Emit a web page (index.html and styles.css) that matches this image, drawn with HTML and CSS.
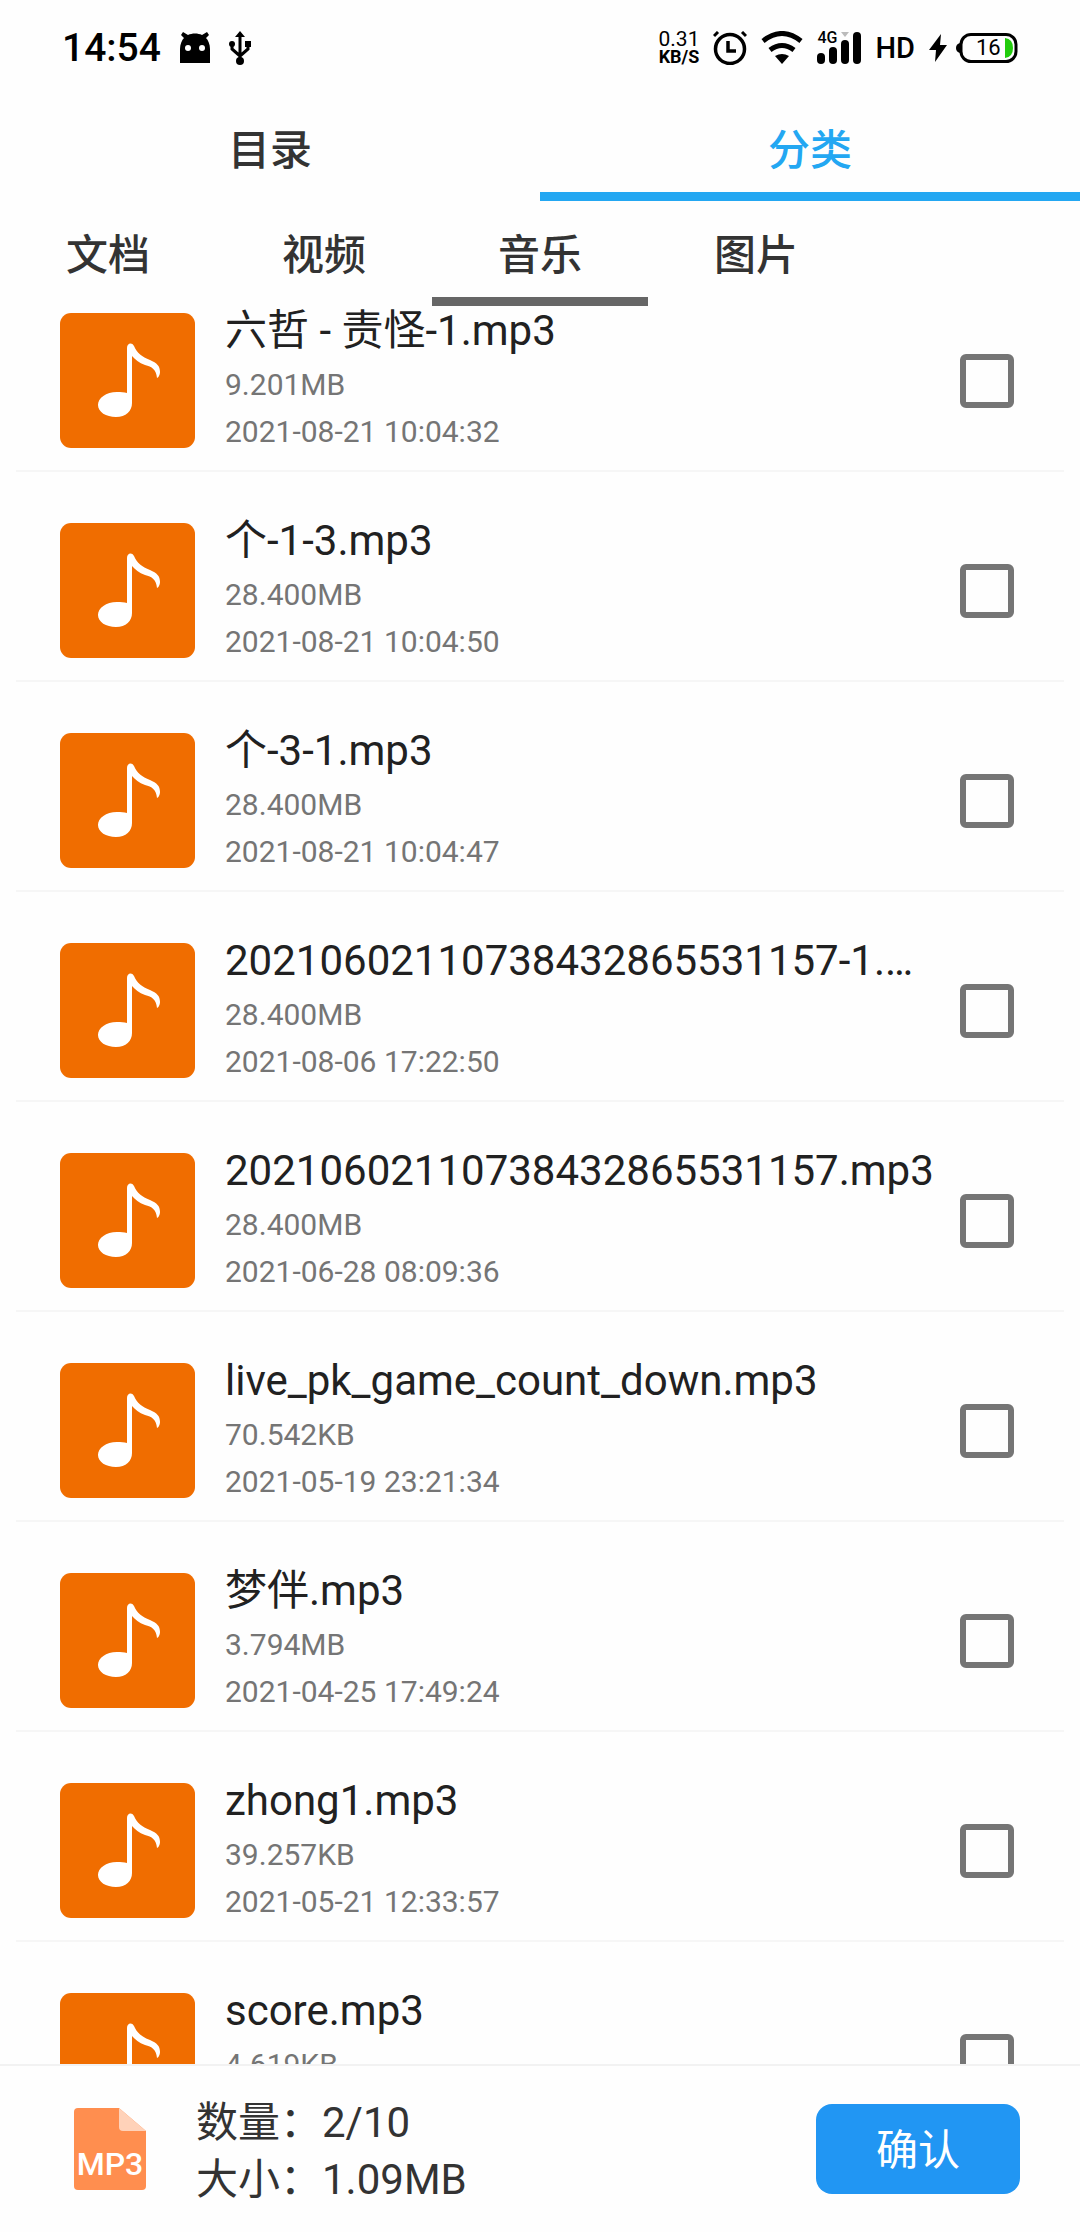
FILE: index.html
```html
<!DOCTYPE html>
<html lang="zh-CN">
<head>
    <meta charset="UTF-8">
    <meta name="viewport" content="width=device-width, initial-scale=1.0">
    <title>选择文件</title>
    <link rel="stylesheet" href="styles.css">
</head>
<body>
    <!-- shared icons -->
    <svg class="sprite" aria-hidden="true">
        <symbol id="note" viewBox="0 0 135 135">
            <rect width="135" height="135" rx="11" fill="#f06d00"/>
            <path fill="#fff" d="M67 80V35c0-5 5-6 7-2 3 7 8 11 16 14 7 3 10 6 10 12 0 3-2 6-3 6-1-9-5-11-12-13-6-2-10-6-13-9V90c0 8-6 14-16 14-10 0-18-5-18-12s8-13 19-13c4 0 7 0 10 1z"/>
        </symbol>
    </svg>

    <header class="status-bar">
        <div class="status-left">
            <span class="time">14:54</span>
            <svg width="32" height="32" viewBox="0 0 32 32">
                <path d="M1 31V17C1 12 3 8 5 6L2 3 4 0l5 3c4-2 10-2 14 0l5-3 2 3-3 3c2 2 4 6 4 11v14z"/>
                <circle cx="9" cy="16" r="3" fill="#fff"/>
                <circle cx="23" cy="16" r="3" fill="#fff"/>
            </svg>
            <svg width="22" height="34" viewBox="0 0 22 34">
                <path d="M11 5v24M3 13v5l8 7M19 13v5l-8 7" fill="none" stroke="#000" stroke-width="3"/>
                <path d="M11 0l5 6H6zM16 10h6v6h-6z"/>
                <circle cx="3" cy="13" r="3"/>
                <circle cx="11" cy="30" r="4"/>
            </svg>
        </div>
        <div class="status-right">
            <div class="speed"><span>0.31</span><b>KB/S</b></div>
            <svg width="34" height="34" viewBox="0 0 34 34">
                <circle cx="17" cy="18" r="14.5" fill="none" stroke="#000" stroke-width="3.5"/>
                <path d="M15 10v10h8" fill="none" stroke="#000" stroke-width="3.5"/>
                <path d="M1 5l4-4M29 1l4 4" stroke="#000" stroke-width="3"/>
            </svg>
            <svg width="42" height="34" viewBox="0 0 42 34">
                <path d="M2 10q19-15 38 0M9 19q12-9 24 0" fill="none" stroke="#000" stroke-width="5"/>
                <path d="M21 33l-7-8q7-4 14 0z"/>
            </svg>
            <div class="signal">
                <svg width="44" height="34" viewBox="0 0 44 34">
                    <rect x="0" y="22" width="8" height="11" rx="4"/>
                    <rect x="12" y="16" width="8" height="17" rx="4"/>
                    <rect x="24" y="9" width="8" height="24" rx="4"/>
                    <rect x="36" y="1" width="8" height="32" rx="4"/>
                    <path d="M24 1h8l-4 5z" fill="#bbb"/>
                </svg>
                <span class="network">4G</span>
            </div>
            <span class="hd">HD</span>
            <div class="power">
                <svg width="18" height="30" viewBox="0 0 18 30">
                    <path d="M12 1L0 17h7L6 29l12-17h-7z"/>
                </svg>
                <div class="battery">
                    <span>16</span>
                    <svg width="62" height="30" viewBox="0 0 62 30">
                        <rect x="5" y="1.5" width="55" height="27" rx="10" fill="none" stroke="#000" stroke-width="3"/>
                        <path d="M4 10q-4 1-4 5t4 5z"/>
                        <path d="M49 5q8 1 8 10t-8 10z" fill="#22cc0c"/>
                    </svg>
                </div>
            </div>
        </div>
    </header>

    <nav class="tabs">
        <button type="button">目录</button>
        <button type="button" class="active">分类</button>
    </nav>
    <nav class="sub-tabs">
        <button type="button">文档</button>
        <button type="button">视频</button>
        <button type="button" class="active">音乐</button>
        <button type="button">图片</button>
    </nav>

    <main class="file-list">
        <ul>
            <li>
                <svg class="thumb"><use href="#note"/></svg>
                <label for="f1">
                    <span class="name">六哲 - 责怪-1.mp3</span>
                    <span class="meta">9.201MB</span>
                    <span class="meta">2021-08-21 10:04:32</span>
                </label>
                <input type="checkbox" id="f1">
            </li>
            <li>
                <svg class="thumb"><use href="#note"/></svg>
                <label for="f2">
                    <span class="name">个-1-3.mp3</span>
                    <span class="meta">28.400MB</span>
                    <span class="meta">2021-08-21 10:04:50</span>
                </label>
                <input type="checkbox" id="f2">
            </li>
            <li>
                <svg class="thumb"><use href="#note"/></svg>
                <label for="f3">
                    <span class="name">个-3-1.mp3</span>
                    <span class="meta">28.400MB</span>
                    <span class="meta">2021-08-21 10:04:47</span>
                </label>
                <input type="checkbox" id="f3">
            </li>
            <li>
                <svg class="thumb"><use href="#note"/></svg>
                <label for="f4">
                    <span class="name">20210602110738432865531157-1.mp3</span>
                    <span class="meta">28.400MB</span>
                    <span class="meta">2021-08-06 17:22:50</span>
                </label>
                <input type="checkbox" id="f4">
            </li>
            <li>
                <svg class="thumb"><use href="#note"/></svg>
                <label for="f5">
                    <span class="name">20210602110738432865531157.mp3</span>
                    <span class="meta">28.400MB</span>
                    <span class="meta">2021-06-28 08:09:36</span>
                </label>
                <input type="checkbox" id="f5">
            </li>
            <li>
                <svg class="thumb"><use href="#note"/></svg>
                <label for="f6">
                    <span class="name">live_pk_game_count_down.mp3</span>
                    <span class="meta">70.542KB</span>
                    <span class="meta">2021-05-19 23:21:34</span>
                </label>
                <input type="checkbox" id="f6">
            </li>
            <li>
                <svg class="thumb"><use href="#note"/></svg>
                <label for="f7">
                    <span class="name">梦伴.mp3</span>
                    <span class="meta">3.794MB</span>
                    <span class="meta">2021-04-25 17:49:24</span>
                </label>
                <input type="checkbox" id="f7">
            </li>
            <li>
                <svg class="thumb"><use href="#note"/></svg>
                <label for="f8">
                    <span class="name">zhong1.mp3</span>
                    <span class="meta">39.257KB</span>
                    <span class="meta">2021-05-21 12:33:57</span>
                </label>
                <input type="checkbox" id="f8">
            </li>
            <li>
                <svg class="thumb"><use href="#note"/></svg>
                <label for="f9">
                    <span class="name">score.mp3</span>
                    <span class="meta">4.619KB</span>
                </label>
                <input type="checkbox" id="f9">
            </li>
        </ul>
    </main>

    <footer class="summary">
        <svg width="72" height="82" viewBox="0 0 72 82">
            <path d="M4 0h41l27 23v55q0 4-4 4H4q-4 0-4-4V4q0-4 4-4z" fill="#ff8e4f"/>
            <path d="M45 0l27 23H49q-4 0-4-4z" fill="#ffd2b9"/>
            <text x="36" y="67" text-anchor="middle" class="file-type">MP3</text>
        </svg>
        <div class="totals">
            <div>数量：2/10</div>
            <div>大小：1.09MB</div>
        </div>
        <button type="button" class="confirm">确认</button>
    </footer>
</body>
</html>
```
FILE: styles.css
```css
* {
    box-sizing: border-box;
}
body {
    margin: 0;
    height: 100vh;
    display: flex;
    flex-direction: column;
    background: #fefefe;
    color: #333;
    font-family: Roboto, "Noto Sans CJK SC", sans-serif;
    font-size: 42px;
}
button {
    border: none;
    background: none;
    padding: 0;
    color: inherit;
    font: inherit;
    cursor: pointer;
}
svg {
    display: block;
    flex: none;
}
.sprite {
    position: absolute;
    width: 0;
    height: 0;
}

/* status bar */
.status-bar {
    display: flex;
    justify-content: space-between;
    align-items: center;
    height: 96px;
    padding: 0 62px;
    color: #000;
}
.status-left {
    display: flex;
    align-items: center;
    gap: 18px;
}
.time {
    font-size: 39px;
    font-weight: 500;
}
.status-right {
    display: flex;
    align-items: center;
    gap: 14px;
}
.speed {
    display: flex;
    flex-direction: column;
    align-items: center;
    font-size: 21px;
    line-height: 18px;
}
.speed b {
    font-size: 18px;
    line-height: 18px;
}
.signal {
    position: relative;
}
.network {
    position: absolute;
    top: 0;
    left: 0;
    font-size: 16px;
    font-weight: 500;
    line-height: 14px;
}
.hd {
    font-size: 29px;
    font-weight: 500;
}
.power {
    display: flex;
    align-items: center;
    gap: 9px;
}
.battery {
    position: relative;
}
.battery span {
    position: absolute;
    top: 0;
    left: 20px;
    font-size: 22px;
    line-height: 30px;
}

/* tabs */
.tabs, .sub-tabs {
    display: flex;
    flex: none;
}
.tabs button, .sub-tabs button {
    height: 105px;
    padding-top: 4px;
    border-bottom: 9px solid transparent;
    font-weight: 500;
}
.tabs button {
    flex: 1;
}
.tabs .active {
    color: #23a7f2;
    border-color: #23a7f2;
}
.sub-tabs button {
    width: 20%;
}
.sub-tabs .active {
    border-color: #666;
}

/* file list */
.file-list {
    flex: 1;
    min-height: 0;
    overflow: hidden;
}
.file-list ul {
    list-style: none;
    margin: -44px 16px 0;
    padding: 0;
}
.file-list li {
    display: flex;
    height: 210px;
    padding: 51px 50px 22px 44px;
    border-bottom: 2px solid #f6f6f6;
}
.thumb {
    width: 135px;
    height: 135px;
}
.file-list label {
    flex: 1;
    min-width: 0;
    margin: -8px 14px 0 30px;
}
.name, .meta {
    display: block;
    white-space: nowrap;
}
.name {
    margin-bottom: 4px;
    overflow: hidden;
    text-overflow: ellipsis;
    color: #212121;
    line-height: 52px;
}
.meta {
    color: #757575;
    font-size: 30px;
    line-height: 47px;
}
.file-list input {
    appearance: none;
    align-self: center;
    width: 54px;
    height: 54px;
    margin: 0;
    border: 6px solid #757575;
    border-radius: 6px;
}
.file-list input:checked {
    background: #23a7f2;
}

/* bottom bar */
.summary {
    display: flex;
    flex: none;
    align-items: center;
    height: 168px;
    padding: 0 60px 0 74px;
    border-top: 2px solid #f2f2f2;
}
.file-type {
    fill: #fff;
    font-size: 32px;
    font-weight: 500;
}
.totals {
    flex: 1;
    margin-left: 50px;
    padding-top: 3px;
    line-height: 57px;
}
.confirm {
    width: 204px;
    height: 90px;
    padding-bottom: 5px;
    border-radius: 16px;
    background: #2196f3;
    color: #fff;
}
```
